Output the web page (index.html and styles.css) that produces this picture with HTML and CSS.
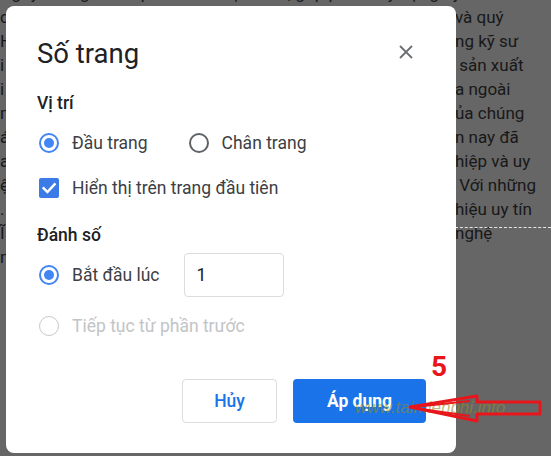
FILE: index.html
```html
<!DOCTYPE html>
<html lang="vi">
<head>
<meta charset="utf-8">
<title>Số trang</title>
<link rel="stylesheet" href="styles.css">
</head>
<body>
<div class="page">
  <div class="doc-text">
    <div class="line-full">ng ty chúng tôi đã phát triển mạnh mẽ, góp phần xây dựng uy tín với đối tác và quý khách hàng</div>
    <div class="cols">
      <div class="left-col">
        <div>c</div><div>H</div><div>i</div><div>i</div><div>m</div><div>á</div><div>a</div><div>ệ</div><div>.</div><div>Ĩ</div><div>n</div>
      </div>
      <div class="right-col">
        <div>và quý</div>
        <div>ng kỹ sư</div>
        <div>&nbsp;sản xuất</div>
        <div>a ngoài</div>
        <div>ủa chúng</div>
        <div>n nay đã</div>
        <div>hiệp và uy</div>
        <div>&nbsp;Với những</div>
        <div>hiệu uy tín</div>
        <div class="page-break">nghệ</div>
        <div>&nbsp;</div>
      </div>
    </div>
  </div>

  <div class="dialog">
    <div class="dialog-head">
      <h1 class="title">Số trang</h1>
      <button class="close" aria-label="Đóng">
        <svg width="14" height="14" viewBox="0 0 14 14"><path d="M1 1 L13 13 M13 1 L1 13" stroke="#6b6e72" stroke-width="1.8" fill="none"/></svg>
      </button>
    </div>

    <div class="section-label label-pos">Vị trí</div>
    <div class="row row-pos">
      <label class="option opt-first"><span class="radio checked"></span><span class="opt-text">Đầu trang</span></label>
      <label class="option"><span class="radio"></span><span class="opt-text">Chân trang</span></label>
    </div>
    <div class="row row-check">
      <label class="option"><span class="checkbox"><svg width="20" height="20" viewBox="0 0 20 20"><path d="M4.6 10.2 L8.4 14 L15.6 6.2" stroke="#fff" stroke-width="2.4" fill="none" stroke-linecap="square"/></svg></span><span class="opt-text">Hiển thị trên trang đầu tiên</span></label>
    </div>

    <div class="section-label label-num">Đánh số</div>
    <div class="row row-start">
      <label class="option"><span class="radio checked"></span><span class="opt-text">Bắt đầu lúc</span></label>
      <div class="num-input">1</div>
    </div>
    <div class="row row-cont">
      <label class="option disabled"><span class="radio off"></span><span class="opt-text">Tiếp tục từ phần trước</span></label>
    </div>

    <div class="actions">
      <button class="btn btn-cancel">Hủy</button>
      <button class="btn btn-apply">Áp dụng</button>
    </div>
  </div>

  <div class="step">5</div>
  <div class="watermark">www.taimienphi.info</div>
  <svg class="arrow" width="151" height="40" viewBox="400 390 151 40">
    <path d="M410 407 L477 396 L477 402 L540 402 L540 414 L477 414 L477 421 Z" fill="none" stroke="#e8161b" stroke-width="3" stroke-linejoin="round"/>
    <path d="M414 407 L470 401 M414 408 L470 416" stroke="#e8161b" stroke-width="2" fill="none"/>
  </svg>
</div>
</body>
</html>
```

FILE: styles.css
```css
* { box-sizing: border-box; }
html, body { margin: 0; padding: 0; }
body { width: 551px; height: 456px; overflow: hidden; font-family: Roboto, "Liberation Sans", sans-serif; }

.page {
  position: relative;
  width: 551px;
  height: 456px;
  overflow: hidden;
  background: #666666;
}

.doc-text {
  margin-top: -19px;
  font-size: 17px;
  line-height: 24px;
  color: #181818;
  white-space: nowrap;
}
.line-full { padding-left: 2px; }
.cols { display: flex; }
.left-col { width: 12px; padding-left: 0; overflow: hidden; }
.right-col { margin-left: auto; width: 96px; overflow: hidden; }
.page-break { position: relative; }
.page-break::before {
  content: "";
  position: absolute;
  left: 0; right: 0; top: 6px;
  border-top: 1px dashed #e6e6e6;
}

.dialog {
  position: absolute;
  left: 6px; top: 6px;
  width: 450px; height: 447px;
  background: #fff;
  border-radius: 8px;
  padding: 32px 30px 30px 31px;
  display: flex;
  flex-direction: column;
  color: #3c4043;
}

.dialog-head { display: flex; align-items: flex-start; justify-content: space-between; height: 32px; }
.title {
  margin: 0;
  font-size: 27.5px;
  line-height: 32px;
  font-weight: 400;
  color: #202124;
}
.close {
  border: 0; background: none; padding: 0;
  margin: 7px 13px 0 0;
  width: 14px; height: 14px;
  display: flex;
}

.section-label {
  font-size: 17.5px;
  line-height: 24px;
  font-weight: 500;
  color: #202124;
}
.label-pos { margin-top: 21px; }
.label-num { margin-top: 23px; }

.row { display: flex; align-items: center; }
.row-pos { margin-top: 16px; height: 24px; }
.row-check { margin-top: 21px; height: 24px; }
.row-start { margin-top: 6px; height: 44px; }
.row-cont { margin-top: 17px; height: 24px; }

.option {
  display: flex;
  align-items: center;
  font-size: 17.5px;
  line-height: 24px;
  color: #3c4043;
}
.opt-first { margin-right: 39px; }
.option.disabled { color: #c2c4c7; }

.radio {
  width: 20px; height: 20px;
  margin-left: 2px; margin-right: 13px;
  border-radius: 50%;
  border: 2px solid #5f6368;
  display: flex; align-items: center; justify-content: center;
  flex: none;
}
.radio.checked { border-color: #4285f4; }
.radio.checked::after {
  content: "";
  width: 10px; height: 10px;
  border-radius: 50%;
  background: #4285f4;
}
.radio.off { border: 1.5px solid #c8c9cb; }

.checkbox {
  width: 20px; height: 20px;
  margin-left: 2px; margin-right: 13px;
  border-radius: 2px;
  background: #3b7be8;
  display: flex;
  flex: none;
}

.num-input {
  margin-left: 24px;
  width: 100px; height: 44px;
  border: 1px solid #dadce0;
  border-radius: 4px;
  padding-left: 12px;
  font-size: 17.5px;
  line-height: 42px;
  color: #202124;
}

.actions {
  margin-top: auto;
  display: flex;
  justify-content: flex-end;
  gap: 16px;
}
.btn {
  height: 44px;
  border-radius: 4px;
  font-family: Roboto, "Liberation Sans", sans-serif;
  font-size: 17.5px;
  font-weight: 500;
  padding: 0;
}
.btn-cancel {
  width: 95px;
  background: #fff;
  border: 1px solid #dadce0;
  color: #1a73e8;
}
.btn-apply {
  width: 133px;
  background: #1a73e8;
  border: 0;
  color: #fff;
  font-weight: 700;
}

.step {
  position: absolute;
  left: 431px; top: 351px;
  font-family: Roboto, "Liberation Sans", sans-serif;
  font-size: 28px;
  font-weight: 700;
  line-height: 32px;
  color: #e8161b;
}
.watermark {
  position: absolute;
  left: 355px; top: 398px;
  font-family: "Liberation Sans", sans-serif;
  font-style: italic;
  font-size: 17px;
  line-height: 20px;
  color: rgba(150, 140, 40, 0.6);
  white-space: nowrap;
}
.arrow {
  position: absolute;
  left: 400px; top: 390px;
}
```
